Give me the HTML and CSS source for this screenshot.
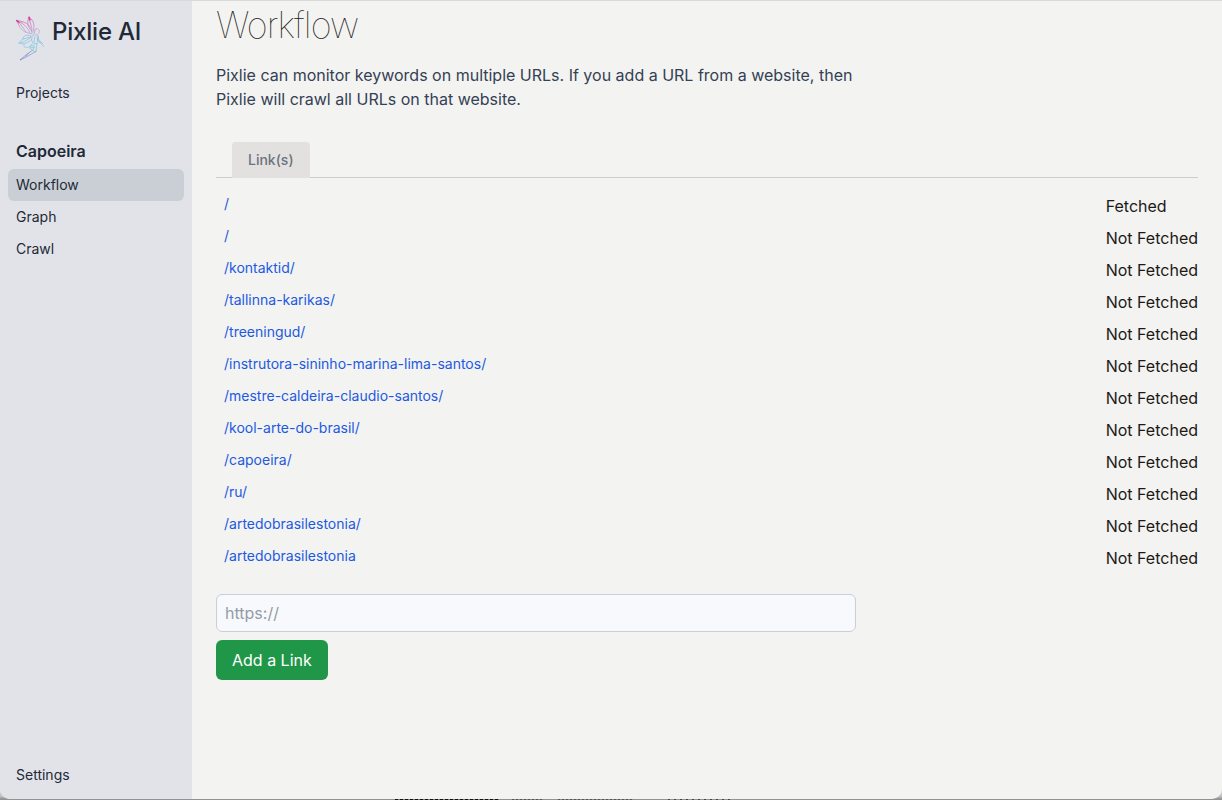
FILE: index.html
```html
<!DOCTYPE html>
<html lang="en">
<head>
<meta charset="utf-8">
<title>Pixlie AI</title>
<link rel="stylesheet" href="styles.css">
</head>
<body>
<div class="window">
  <aside class="sidebar">
    <div class="brand">
      <svg class="logo" viewBox="0 0 28 46" fill="none" stroke-linecap="round" stroke-linejoin="round">
        <defs>
          <linearGradient id="fairy" x1="0" y1="0" x2="0" y2="46" gradientUnits="userSpaceOnUse">
            <stop offset="0" stop-color="#d2459f"/>
            <stop offset=".3" stop-color="#c79bd0"/>
            <stop offset=".48" stop-color="#86bfe0"/>
            <stop offset=".68" stop-color="#82cbe5"/>
            <stop offset=".85" stop-color="#8793c9"/>
            <stop offset="1" stop-color="#7476b8"/>
          </linearGradient>
        </defs>
        <g stroke="url(#fairy)" stroke-width=".75">
          <path d="M16 17C15 11 13 6 .5 4.500C3 10 5 14 9 16L16 18M4 6C8 8 12 12 14 17M1 5C5 8 8 13 10 16"/>
          <path d="M16 16C11 10 11 6 13 1C18 5 19 9 17 15M13 2C14 7 16 10 16 15"/>
          <path d="M15 20C10 18 7 20 7 23L2.500 27C8 29 12 27 16 23M7 23L15 21M4 27C8 26 12 24 15 21M8 28C7 32 10 33 17 29"/>
          <path d="M18 17C17 13 21 11 23 14C24 17 22 19 20 19C18 18 18 15 20 14M18 18C15 21 15 24 17 27L21 28L22 20M19 20L18 26M22 20L23 25L28 31M21 22L24 27M24 25L27 28"/>
          <path d="M16 28C12 31 14 34 20 36C20 32 21 29 21 28M18 29L17 34L11 38L4 44L12 40L19 36M14 32L19 31M15 35L10 40"/>
        </g>
        <path d="M.7 4.500L3 6.300M13 1L14 4" stroke="#d33b97" stroke-width="1.300"/>
      </svg>
      <span class="brand-name">Pixlie AI</span>
    </div>
    <nav class="menu">
      <a class="item">Projects</a>
      <h2 class="project">Capoeira</h2>
      <a class="item active">Workflow</a>
      <a class="item">Graph</a>
      <a class="item">Crawl</a>
      <a class="item settings">Settings</a>
    </nav>
  </aside>
  <main class="content">
    <h1 class="title">Workflow</h1>
    <p class="intro">Pixlie can monitor keywords on multiple URLs. If you add a URL from a website, then Pixlie will crawl all URLs on that website.</p>
    <div class="tabs"><div class="tab">Link(s)</div></div>
    <div class="links">
      <a class="link">/</a><span class="status">Fetched</span>
      <a class="link">/</a><span class="status">Not Fetched</span>
      <a class="link">/kontaktid/</a><span class="status">Not Fetched</span>
      <a class="link">/tallinna-karikas/</a><span class="status">Not Fetched</span>
      <a class="link">/treeningud/</a><span class="status">Not Fetched</span>
      <a class="link">/instrutora-sininho-marina-lima-santos/</a><span class="status">Not Fetched</span>
      <a class="link">/mestre-caldeira-claudio-santos/</a><span class="status">Not Fetched</span>
      <a class="link">/kool-arte-do-brasil/</a><span class="status">Not Fetched</span>
      <a class="link">/capoeira/</a><span class="status">Not Fetched</span>
      <a class="link">/ru/</a><span class="status">Not Fetched</span>
      <a class="link">/artedobrasilestonia/</a><span class="status">Not Fetched</span>
      <a class="link">/artedobrasilestonia</a><span class="status">Not Fetched</span>
    </div>
    <input class="url" type="text" placeholder="https://">
    <button class="add">Add a Link</button>
  </main>
</div>
<div class="backdrop-marks"></div>
</body>
</html>
```
FILE: styles.css
```css
* { box-sizing: border-box; margin: 0; }
body {
  height: 800px;
  overflow: hidden;
  background: linear-gradient(#c5c5c5 0 796px, #929292 799px);
  font-family: Inter, "Liberation Sans", sans-serif;
  font-size: 16px;
  line-height: 24px;
  color: #1c1917;
}
.window {
  display: flex;
  height: 799px;
  overflow: hidden;
  border-top: 1px solid #dad9d8;
  border-radius: 0 0 10px 10px;
  background: #f3f3f1;
}
.sidebar {
  display: flex;
  flex-direction: column;
  flex: none;
  width: 192px;
  padding: 15px 8px 8px;
  background: #e2e3e8;
  color: #1f2937;
}
.brand { display: flex; gap: 8px; height: 46px; padding-left: 8px; }
.logo { width: 28px; height: 46px; }
.brand-name { font-size: 24px; line-height: 32px; font-weight: 500; letter-spacing: -0.2px; }
.menu { display: flex; flex: 1; flex-direction: column; padding-top: 15px; }
.item {
  height: 32px;
  padding: 0 8px;
  border-radius: 6px;
  font-size: 14px;
  line-height: 32px;
}
.active { background: #cacfd6; }
.settings { margin-top: auto; }
.project { margin-top: 30px; padding: 0 8px; height: 30px; font-size: 16px; line-height: 24px; font-weight: 600; }
.content { flex: 1; padding: 4px 24px 0; }
.title { font-size: 36px; line-height: 40px; font-weight: 100; letter-spacing: -0.9px; }
.intro { width: 640px; margin-top: 18px; color: #334155; }
.tabs { display: flex; height: 36px; margin-top: 31px; padding-left: 16px; border-bottom: 1px solid #cfcccb; }
.tab {
  height: 36px;
  padding: 0 16px;
  border-radius: 4px 4px 0 0;
  background: #e2e1df;
  color: #6b7280;
  font-size: 14px;
  line-height: 36px;
  font-weight: 500;
}
.links {
  display: grid;
  grid-template-columns: 1fr auto;
  grid-auto-rows: 24px;
  row-gap: 8px;
  margin-top: 16px;
}
.link { padding-left: 8px; font-size: 14px; line-height: 20px; color: #1d5ae0; }
.url {
  display: block;
  width: 640px;
  height: 38px;
  margin-top: 24px;
  padding: 0 8px;
  border: 1px solid #c9ced9;
  border-radius: 6px;
  background: #f8f9fc;
  font: inherit;
}
.url::placeholder { color: #949ca8; }
.add {
  display: block;
  height: 40px;
  margin-top: 8px;
  padding: 0 16px;
  border: 0;
  border-radius: 6px;
  background: #209748;
  color: #fff;
  font: inherit;
}
/* Tops of the text lines showing from the window behind */
.backdrop-marks {
  height: 1px;
  margin-left: 395px;
  width: 338px;
  background:
    repeating-linear-gradient(90deg, #111 0 3px, #777 3px 5px) 0 0 / 104px 1px no-repeat,
    repeating-linear-gradient(90deg, #555 0 2px, #888 2px 4px) 117px 0 / 31px 1px no-repeat,
    repeating-linear-gradient(90deg, #555 0 2px, #888 2px 4px) 163px 0 / 75px 1px no-repeat,
    repeating-linear-gradient(90deg, #444 0 2px, #929292 2px 6px) 273px 0 / 65px 1px no-repeat;
}
```
